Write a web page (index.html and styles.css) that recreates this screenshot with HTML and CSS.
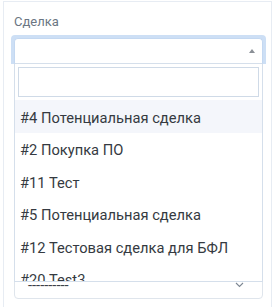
FILE: index.html
```html
<!DOCTYPE html>
<html lang="ru">
<head>
  <meta charset="UTF-8" />
  <meta name="viewport" content="width=device-width, initial-scale=1.0"/>
  <title>Сделка</title>
  <link rel="stylesheet" href="styles.css">
</head>
<body>
  <section class="card">
    <div class="field field-deal">
      <label class="field-label">Сделка</label>
      <div class="select select-open">
        <span class="select-value"></span>
        <span class="select-arrow"></span>
      </div>

      <div class="dropdown">
        <div class="dropdown-search">
          <input type="text" class="search-input">
        </div>
        <ul class="results">
          <li class="result result-active">#4 Потенциальная сделка</li>
          <li class="result">#2 Покупка ПО</li>
          <li class="result">#11 Тест</li>
          <li class="result">#5 Потенциальная сделка</li>
          <li class="result">#12 Тестовая сделка для БФЛ</li>
          <li class="result">#20 Test3</li>
          <li class="result">#21 Поставка оборудования</li>
          <li class="result">#22 Внедрение CRM</li>
          <li class="result">#23 Продление лицензии</li>
          <li class="result">#24 Консультация</li>
          <li class="result">#25 Test4</li>
          <li class="result">#26 Сервисный договор</li>
          <li class="result">#27 Потенциальная сделка</li>
          <li class="result">#28 Обучение персонала</li>
          <li class="result">#29 Test5</li>
          <li class="result">#30 Доработка модуля</li>
          <li class="result">#31 Покупка ПО</li>
          <li class="result">#32 Тест</li>
          <li class="result">#33 Интеграция</li>
          <li class="result">#34 Техподдержка</li>
          <li class="result">#35 Test6</li>
          <li class="result">#36 Аудит</li>
          <li class="result">#37 Поставка</li>
          <li class="result">#38 Потенциальная сделка</li>
        </ul>
      </div>
    </div>

    <div class="field">
      <label class="field-label">Описание</label>
      <textarea class="textarea"></textarea>
    </div>

    <div class="field">
      <label class="field-label">Этап</label>
      <div class="form-select">
        <span>----------</span>
        <svg class="chevron" width="9" height="6" viewBox="0 0 9 6">
          <path d="M1 1l3.5 3.5L8 1" fill="none" stroke="#7d8793" stroke-width="1.1"/>
        </svg>
      </div>
    </div>
  </section>
</body>
</html>
```

FILE: styles.css
```css
body {
  margin: 0;
  padding: 1px 6px 0 3px;
  background-color: #fff;
  font-family: Roboto, "Open Sans", sans-serif;
  color: #3b4148;
}

.card {
  border: 1px solid #e7ecf3;
  border-bottom: none;
  padding: 9px 8px 40px 10px;
  min-height: 320px;
}

.field {
  margin-bottom: 16px;
}

.field-deal {
  position: relative;
}

.field-label {
  display: block;
  height: 20px;
  font-size: 13px;
  line-height: 22px;
  color: #6b7683;
  margin-bottom: 7px;
}

.select {
  position: relative;
  height: 24px;
  border: 1px solid #dde4ec;
  border-radius: 4px;
}

.select-open {
  border-color: #c4d8f1;
  border-bottom-color: #d5dfeb;
  border-radius: 4px 4px 0 0;
  box-shadow: 0 -3px 0 0 #cddff5, -3px 0 0 0 #cddff5, 3px 0 0 0 #cddff5, -3px -3px 0 0 #cddff5, 3px -3px 0 0 #cddff5;
}

.select-arrow {
  position: absolute;
  right: 7px;
  top: 10px;
  border-style: solid;
  border-width: 0 3.5px 4px;
  border-color: transparent transparent #8a8f96;
}

.dropdown {
  position: absolute;
  top: 53px;
  left: 0;
  right: 0;
  z-index: 10;
  background: #fff;
  border: 1px solid #d5dfeb;
  border-top: none;
}

.dropdown-search {
  padding: 3px;
}

.search-input {
  display: block;
  box-sizing: border-box;
  width: 100%;
  height: 30px;
  margin: 0;
  border: 1px solid #cfdae7;
  outline: none;
}

.results {
  list-style: none;
  margin: 0;
  padding: 0;
  height: 181px;
  overflow-y: scroll;
}

.result {
  box-sizing: border-box;
  height: 32.5px;
  padding: 7.5px 5px 0;
  font-size: 14.7px;
  line-height: 20px;
  white-space: nowrap;
  color: #353a41;
}

.result-active {
  background-color: #f4f6fb;
}

.textarea {
  display: block;
  box-sizing: border-box;
  width: 100%;
  height: 121px;
  margin: 0;
  border: 1px solid #dde4ec;
  border-radius: 4px;
  resize: none;
}

.form-select {
  position: relative;
  box-sizing: border-box;
  height: 28px;
  padding: 0 13px;
  border: 1px solid #dfe5ec;
  border-radius: 4px;
  font-size: 14.7px;
  line-height: 26px;
  color: #3b4148;
}

.chevron {
  position: absolute;
  right: 18px;
  top: 10px;
}
```
